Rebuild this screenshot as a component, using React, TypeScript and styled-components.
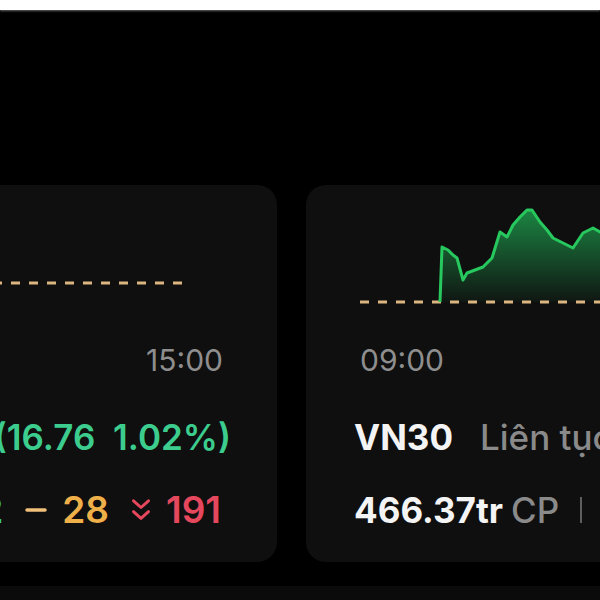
import React, { useId } from 'react';
import styled, { createGlobalStyle } from 'styled-components';

const CARD_W = 860;
const PAD = 48;
const CHART_W = CARD_W - PAD * 2;
const CHART_H = 130;
const CARD_RIGHT = 277; // right edge of the scrolled-away first card

const GlobalStyle = createGlobalStyle`
  html, body {
    margin: 0;
    padding: 0;
    background: #000;
  }
  body {
    font-family: Inter, "Noto Sans", sans-serif;
    -webkit-font-smoothing: antialiased;
  }
`;

const Screen = styled.div`
  width: 600px;
  height: 600px;
  overflow: hidden;
  background: #000;
  display: flex;
  flex-direction: column;
`;

const TopStrip = styled.div`
  height: 10px;
  flex-shrink: 0;
  background: #fff;
  box-shadow: 0 1px 2px rgba(255, 255, 255, 0.4);
`;

const Stage = styled.div`
  padding-top: 175px;
  overflow: hidden;
`;

// scrolled carousel: first card is mostly off to the left
const Track = styled.div`
  display: flex;
  gap: 29px;
  margin-left: ${CARD_RIGHT - CARD_W}px;
`;

const Card = styled.div`
  flex: 0 0 ${CARD_W}px;
  width: ${CARD_W}px;
  min-width: 0;
  overflow: hidden;
  box-sizing: border-box;
  padding: 20px ${PAD}px 32px;
  background: #0f0f0f;
  border-radius: 20px;
  display: flex;
  flex-direction: column;
`;

const TimeRow = styled.div`
  margin-top: 8px;
  padding: 0 6px;
  display: flex;
  justify-content: space-between;
  font-size: 30px;
  line-height: 34px;
  font-weight: 400;
  color: #8e8e8e;
`;

const Row = styled.div<{ $top: number }>`
  margin-top: ${(p) => p.$top}px;
  display: flex;
  justify-content: space-between;
  align-items: center;
  white-space: nowrap;
  font-size: 35px;
  line-height: 40px;
`;

const Group = styled.div<{ $gap: number; $end?: number }>`
  display: flex;
  align-items: center;
  gap: ${(p) => p.$gap}px;
  margin-right: ${(p) => p.$end ?? 0}px;
`;

const Strong = styled.span`
  font-weight: 700;
  color: #f4f4f4;
`;

const Muted = styled.span`
  font-weight: 500;
  color: #8a8a8a;
`;

const Divider = styled.span`
  width: 2px;
  height: 26px;
  margin: 0 13px;
  background: #5e5e5e;
`;

const Value = styled.span<{ $color: string }>`
  font-weight: 600;
  color: ${(p) => p.$color};
`;

const Stat = styled.div`
  display: flex;
  align-items: center;
  gap: 15px;
  font-size: 37px;
`;

const BottomBar = styled.div`
  margin-top: 24px;
  height: 14px;
  background: #0b0b0b;
`;

const GREEN = '#3ccd8e';
const ORANGE = '#efb049';
const RED = '#e5475d';

type Pt = [number, number];

const Chart: React.FC<{ baseline: number; dashEnd: number; points?: Pt[] }> = ({
  baseline,
  dashEnd,
  points,
}) => {
  const id = useId().replace(/:/g, '');
  const line = points ? 'M' + points.map((p) => p.join(',')).join(' L') : '';
  const area = points
    ? `${line} L${points[points.length - 1][0]},${baseline} L${points[0][0]},${baseline} Z`
    : '';
  return (
    <svg width={CHART_W} height={CHART_H} viewBox={`0 0 ${CHART_W} ${CHART_H}`}>
      <defs>
        <linearGradient id={`fill${id}`} x1="0" y1="0" x2="0" y2="1">
          <stop offset="0%" stopColor="#22c55e" stopOpacity="0.65" />
          <stop offset="100%" stopColor="#22c55e" stopOpacity="0.04" />
        </linearGradient>
      </defs>
      {points && <path d={area} fill={`url(#fill${id})`} />}
      <line
        x1={6}
        x2={dashEnd}
        y1={baseline}
        y2={baseline}
        stroke="#dcb680"
        strokeWidth={3}
        strokeDasharray="9 9"
      />
      {points && (
        <path d={line} fill="none" stroke="#27c95e" strokeWidth={3} strokeLinejoin="round" />
      )}
    </svg>
  );
};

const ChevronsIcon: React.FC<{ dir: 'up' | 'down'; color: string }> = ({ dir, color }) => (
  <svg width={20} height={24} viewBox="0 0 12 14" fill="none" stroke={color} strokeWidth={1.8} strokeLinecap="round" strokeLinejoin="round">
    {dir === 'down' ? (
      <>
        <path d="M1.5 1.5 L6 5.5 L10.5 1.5" />
        <path d="M1.5 8 L6 12 L10.5 8" />
      </>
    ) : (
      <>
        <path d="M1.5 5.5 L6 1.5 L10.5 5.5" />
        <path d="M1.5 12 L6 8 L10.5 12" />
      </>
    )}
  </svg>
);

const DashIcon: React.FC<{ color: string }> = ({ color }) => (
  <svg width={22} height={24} viewBox="0 0 22 24">
    <line x1={2} x2={20} y1={12} y2={12} stroke={color} strokeWidth={3.5} strokeLinecap="round" />
  </svg>
);

const vn30Points: Pt[] = [
  [86, 97], [88, 42], [94, 45], [99, 50], [103, 53], [109, 75], [113, 68],
  [121, 65], [129, 62], [138, 53], [146, 27], [153, 32], [159, 20], [166, 12],
  [173, 5], [178, 5], [186, 17], [193, 25], [199, 33], [209, 38], [219, 43],
  [229, 28], [239, 23], [246, 27], [258, 34], [272, 30], [292, 44], [312, 38],
  [332, 50], [362, 42], [392, 58], [422, 48], [452, 55],
];

interface IIndex {
  name: string;
  status: string;
  price: string;
  change: string;
  volume: string;
  value: string;
  up: number;
  flat: number;
  down: number;
  baseline: number;
  dashEnd: number;
  points?: Pt[];
}

const IndexCard: React.FC<{ data: IIndex }> = ({ data }) => (
  <Card>
    <Chart baseline={data.baseline} dashEnd={data.dashEnd} points={data.points} />
    <TimeRow>
      <span>09:00</span>
      <span>15:00</span>
    </TimeRow>
    <Row $top={40}>
      <Group $gap={27}>
        <Strong>{data.name}</Strong>
        <Muted>{data.status}</Muted>
      </Group>
      <Group $gap={10} $end={-2}>
        <Value $color={GREEN}>{data.price}</Value>
        <Value $color={GREEN}>{data.change}</Value>
      </Group>
    </Row>
    <Row $top={33}>
      <Group $gap={8}>
        <Strong>{data.volume}</Strong>
        <Muted>CP</Muted>
        <Divider />
        <Strong>{data.value}</Strong>
        <Muted>tỷ</Muted>
      </Group>
      <Group $gap={22} $end={8}>
        <Stat>
          <ChevronsIcon dir="up" color={GREEN} />
          <Value $color={GREEN}>{data.up}</Value>
        </Stat>
        <Stat>
          <DashIcon color="#f1c07a" />
          <Value $color={ORANGE}>{data.flat}</Value>
        </Stat>
        <Stat>
          <ChevronsIcon dir="down" color={RED} />
          <Value $color={RED}>{data.down}</Value>
        </Stat>
      </Group>
    </Row>
  </Card>
);

const indices: IIndex[] = [
  {
    name: 'VNINDEX',
    status: 'Liên tục',
    price: '1,661.70',
    change: '(16.76\u00a0\u00a01.02%)',
    volume: '612.48tr',
    value: '18,264',
    up: 252,
    flat: 28,
    down: 191,
    baseline: 78,
    dashEnd: 183 - (CARD_RIGHT - CARD_W + PAD),
  },
  {
    name: 'VN30',
    status: 'Liên tục',
    price: '1,842.15',
    change: '(19.34\u00a0\u00a01.06%)',
    volume: '466.37tr',
    value: '15,120',
    up: 19,
    flat: 2,
    down: 9,
    baseline: 97,
    dashEnd: CHART_W,
    points: vn30Points,
  },
];

const App: React.FC = () => (
  <Screen>
    <GlobalStyle />
    <TopStrip />
    <Stage>
      <Track>
        {indices.map((d) => (
          <IndexCard key={d.name} data={d} />
        ))}
      </Track>
    </Stage>
    <BottomBar />
  </Screen>
);

export default App;
